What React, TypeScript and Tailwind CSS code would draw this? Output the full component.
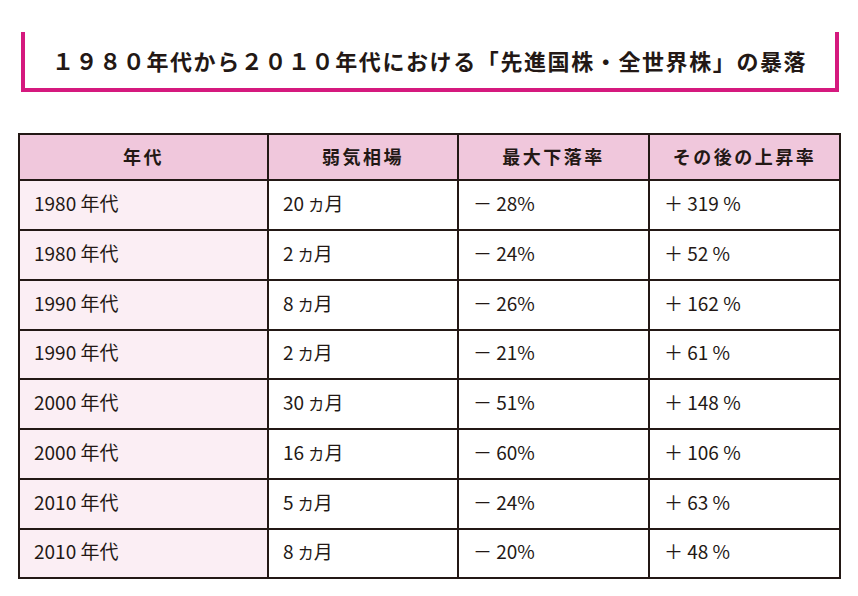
const rows: [string, string, string, string][] = [
  ["1980", "20", "－ 28%", "＋ 319 %"],
  ["1980", "2", "－ 24%", "＋ 52 %"],
  ["1990", "8", "－ 26%", "＋ 162 %"],
  ["1990", "2", "－ 21%", "＋ 61 %"],
  ["2000", "30", "－ 51%", "＋ 148 %"],
  ["2000", "16", "－ 60%", "＋ 106 %"],
  ["2010", "5", "－ 24%", "＋ 63 %"],
  ["2010", "8", "－ 20%", "＋ 48 %"],
];

const headers = ["年代", "弱気相場", "最大下落率", "その後の上昇率"];

const cell = "border-2 border-[#231815] text-[19px] pl-[14px] pt-0 pb-[4px]";

export default function App() {
  return (
    <div
      className="w-[858px] h-[596px] bg-white text-[#231815] pt-8"
      style={{ fontFamily: '"Noto Sans CJK JP", "Noto Sans", sans-serif' }}
    >
      {/* Title box */}
      <div className="ml-[21px] w-[818px] h-[60px] border-l-4 border-r-4 border-b-4 border-[#d5197e] flex items-center pl-[27px]">
        <h1 className="text-[22px] font-bold tracking-[1.6px] leading-none">
          １９８０年代から２０１０年代における「先進国株・全世界株」の暴落
        </h1>
      </div>

      {/* Table */}
      <table className="ml-[18px] mt-[41px] w-[821px] border-collapse table-fixed">
        <colgroup>
          <col className="w-[249px]" />
          <col className="w-[190px]" />
          <col className="w-[191px]" />
          <col className="w-[191px]" />
        </colgroup>
        <thead>
          <tr className="h-[46px] bg-[#f0c7dc]">
            {headers.map((h) => (
              <th
                key={h}
                className="border-2 border-[#231815] text-[18px] font-bold tracking-[2.5px] text-center p-0 pb-[2px]"
              >
                {h}
              </th>
            ))}
          </tr>
        </thead>
        <tbody>
          {rows.map((r, i) => (
            <tr key={i} className={i % 4 === 3 ? "h-[49px]" : "h-[50px]"}>
              <td className={`${cell} bg-[#fbeef4]`}>{r[0]} 年代</td>
              <td className={`${cell} bg-white`}>
                {r[1]} <span className="text-[16px]">カ</span>月
              </td>
              <td className={`${cell} bg-white`}>{r[2]}</td>
              <td className={`${cell} bg-white`}>{r[3]}</td>
            </tr>
          ))}
        </tbody>
      </table>
    </div>
  );
}
